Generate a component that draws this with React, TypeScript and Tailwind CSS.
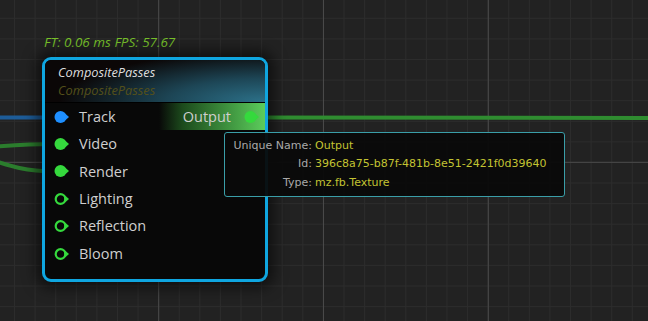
import React from 'react';

type PinKind = 'blue' | 'green' | 'ring';

const INPUTS: { name: string; kind: PinKind }[] = [
    { name: 'Track', kind: 'blue' },
    { name: 'Video', kind: 'green' },
    { name: 'Render', kind: 'green' },
    { name: 'Lighting', kind: 'ring' },
    { name: 'Reflection', kind: 'ring' },
    { name: 'Bloom', kind: 'ring' },
];

const TIP_ROWS = [
    { label: 'Unique Name:', value: 'Output' },
    { label: 'Id:', value: '396c8a75-b87f-481b-8e51-2421f0d39640' },
    { label: 'Type:', value: 'mz.fb.Texture' },
];

function Pin({ kind }: { kind: PinKind }) {
    const color = kind === 'blue' ? '#1e8fff' : '#35d93d';
    return (
        <svg width="18" height="14" viewBox="0 0 18 14" className="shrink-0">
            <polygon points="10.5,3 15,7 10.5,11" fill={color} />
            {kind === 'ring' ? (
                <circle cx="6.5" cy="7" r="4.8" fill="none" stroke={color} strokeWidth="2.2" />
            ) : (
                <circle cx="6.5" cy="7" r="6" fill={color} />
            )}
        </svg>
    );
}

export default function App() {
    return (
        <div className="relative h-[321px] w-[648px] overflow-hidden bg-[#222222] font-['Open_Sans',sans-serif]">
            {/* grid */}
            <div className="absolute inset-0 bg-[linear-gradient(to_right,#2c2c2c_1px,transparent_1px),linear-gradient(to_bottom,#2c2c2c_1px,transparent_1px)] bg-[size:20.6px_20.6px] bg-[position:14px_17.8px]" />
            <div className="absolute inset-0 bg-[linear-gradient(to_right,#4a4a4a_1px,transparent_1px),linear-gradient(to_bottom,#4a4a4a_1px,transparent_1px)] bg-[size:164.8px_164.8px] bg-[position:158.2px_161.8px]" />

            {/* wires */}
            <svg className="absolute inset-0" width="648" height="321">
                <path d="M-5 117.5 L50 117.5" stroke="#1d5c98" strokeWidth="4" fill="none" />
                <path d="M-5 146.5 C15 145 30 144 55 144" stroke="#2b7d2d" strokeWidth="4" fill="none" />
                <path d="M-5 161 C10 166 25 171 55 171.5" stroke="#2b7d2d" strokeWidth="4" fill="none" />
                <path d="M255 117.5 L650 118" stroke="#2f8c30" strokeWidth="4" fill="none" />
            </svg>

            <div className="absolute left-[44px] top-[32px] text-[13.5px] italic text-[#78c22a]">
                FT: 0.06 ms FPS: 57.67
            </div>

            {/* node */}
            <div className="absolute left-[42px] top-[57px] flex h-[225px] w-[226px] flex-col overflow-hidden rounded-[9px] border-[3px] border-[#0fa6e0] bg-[#080808] shadow-[0_0_14px_6px_rgba(0,0,0,0.55)]">
                <div className="flex h-[43px] flex-col justify-center border-b border-black bg-[radial-gradient(ellipse_110%_140%_at_100%_100%,#2c7189_0%,#1d4656_40%,#0b0707_85%)] pl-[13px] text-[12.8px] italic leading-[18px]">
                    <span className="text-[#dedede]">CompositePasses</span>
                    <span className="text-[#54501a]">CompositePasses</span>
                </div>
                <div className="flex flex-1">
                    <div className="flex flex-1 flex-col pl-[9px]">
                        {INPUTS.map((p) => (
                            <div key={p.name} className="flex h-[27.4px] items-center gap-[7px] text-[14.5px] text-[#cfcfcf]">
                                <Pin kind={p.kind} />
                                <span>{p.name}</span>
                            </div>
                        ))}
                    </div>
                    <div className="flex h-[27.4px] w-[106px] items-center justify-end gap-[13px] bg-[linear-gradient(to_right,transparent_0%,#1c4a1c_22%,#5bcd5b_100%)] pr-[3px] text-[14.5px] text-[#cfcfcf]">
                        <span>Output</span>
                        <Pin kind="green" />
                    </div>
                </div>
            </div>

            {/* tooltip */}
            <div className="absolute left-[224px] top-[132px] flex h-[65px] w-[341px] flex-col justify-center rounded-[3px] border border-[#3a9ea8] bg-[#0a0a0a]/95 font-['DejaVu_Sans',sans-serif] text-[11px] leading-[18.5px]">
                {TIP_ROWS.map((r) => (
                    <div key={r.label} className="flex gap-[3px]">
                        <span className="w-[87px] text-right text-[#a9a9a9]">{r.label}</span>
                        <span className="text-[#c3c332]">{r.value}</span>
                    </div>
                ))}
            </div>
        </div>
    );
}
